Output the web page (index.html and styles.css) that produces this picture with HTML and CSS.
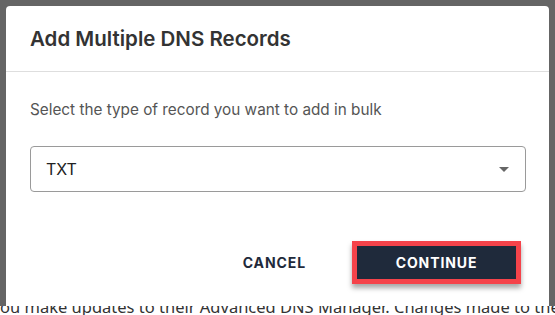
FILE: index.html
```html
<!DOCTYPE html>
<html>
<head>
<meta charset="utf-8">
<link rel="stylesheet" href="styles.css">
</head>
<body>
<div class="page">
  <div class="modal">
    <div class="modal-header">
      <h1 class="modal-title">Add Multiple DNS Records</h1>
    </div>
    <div class="modal-body">
      <p class="modal-text">Select the type of record you want to add in bulk</p>
      <div class="select">
        <span class="select-value">TXT</span>
        <span class="select-arrow"></span>
      </div>
    </div>
    <div class="modal-footer">
      <button class="btn btn-cancel">CANCEL</button>
      <div class="highlight">
        <button class="btn btn-continue">CONTINUE</button>
      </div>
    </div>
  </div>
  <div class="page-strip"><span class="strip-text">ou make updates to their Advanced DNS Manager. Changes made to thes</span></div>
</div>
</body>
</html>
```
FILE: styles.css
```css
* { box-sizing: border-box; }
html, body {
  margin: 0;
  padding: 0;
  width: 555px;
  height: 315px;
  overflow: hidden;
}
body {
  background: #656565;
  font-family: "Inter", "Noto Sans", sans-serif;
}
.page {
  position: relative;
  width: 555px;
  height: 315px;
  padding: 6px 6px 0 6px;
}
.modal {
  background: #fff;
  border-radius: 4px 4px 0 0;
  height: 309px;
  display: flex;
  flex-direction: column;
}
.modal-header {
  height: 66px;
  display: flex;
  align-items: center;
  padding: 0 24px;
  border-bottom: 1px solid #dedede;
}
.modal-title {
  margin: 0;
  font-size: 20.5px;
  font-weight: 600;
  color: #333;
  line-height: 24px;
}
.modal-body {
  padding: 28px 23px 0 24px;
}
.modal-text {
  margin: 0;
  font-size: 15.3px;
  line-height: 20px;
  color: #555;
}
.select {
  margin-top: 26px;
  height: 46px;
  border: 1px solid #9a9a9a;
  border-radius: 4px;
  display: flex;
  align-items: center;
  justify-content: space-between;
  padding: 0 16px 0 15px;
}
.select-value {
  font-size: 16px;
  color: #222;
}
.select-arrow {
  width: 0;
  height: 0;
  border-left: 5px solid transparent;
  border-right: 5px solid transparent;
  border-top: 5px solid #666;
}
.modal-footer {
  display: flex;
  justify-content: flex-end;
  align-items: center;
  padding: 49px 28px 0 0;
  gap: 46px;
}
.btn {
  font-family: "Inter", "Noto Sans", sans-serif;
  font-weight: 700;
  font-size: 14px;
  letter-spacing: 0.9px;
  border: none;
  background: none;
  cursor: pointer;
}
.btn-cancel {
  color: #1f2a3b;
  padding: 0;
}
.highlight {
  border: 5px solid #f5434a;
  box-shadow: 0 4px 5px rgba(0,0,0,0.35);
}
.btn-continue {
  display: block;
  width: 159px;
  height: 33px;
  background: #1f2a3b;
  color: #fff;
}
.page-strip {
  position: absolute;
  left: 0;
  top: 306px;
  width: 555px;
  height: 9px;
  background: #fff;
  overflow: hidden;
}
.strip-text {
  display: block;
  margin-top: -7px;
  color: #333;
  font-family: "Noto Sans", sans-serif;
  font-size: 16.5px;
  line-height: 16px;
  white-space: nowrap;
}
```
